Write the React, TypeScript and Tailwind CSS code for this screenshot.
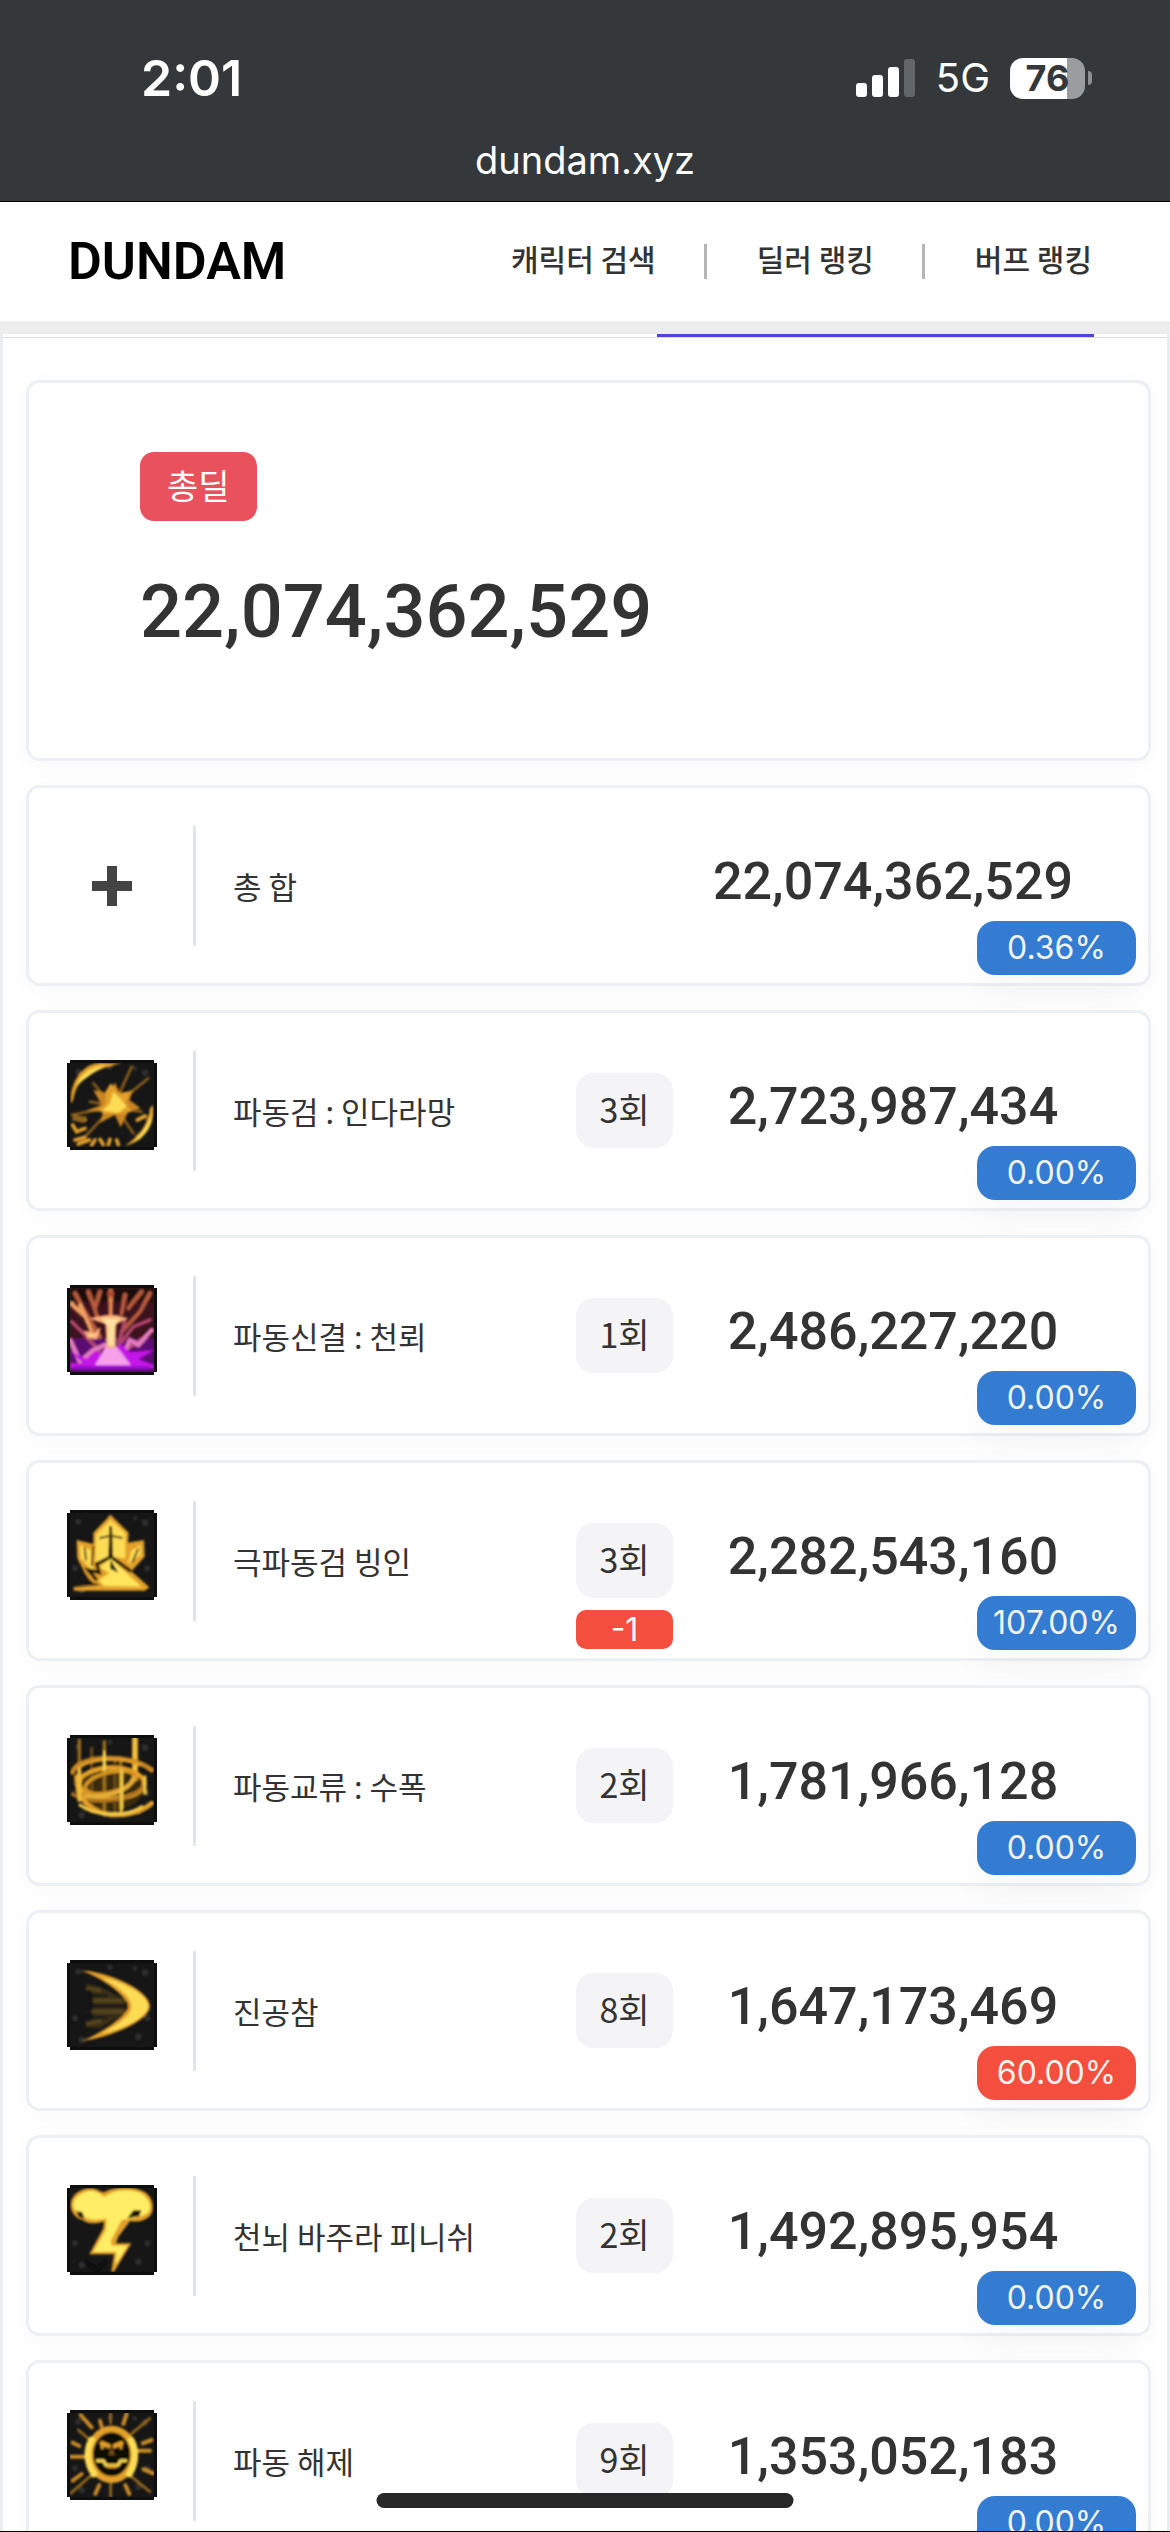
import type { ReactNode } from "react";
import clsx from "clsx";

interface Skill {
  id: string;
  name: string;
  damage: number;
  rate: string;
  rateTone?: "blue" | "red";
  count?: number;
  diff?: number;
  icon: ReactNode;
}

const TOTAL = 22074362529;

const GOLD = "#e3a029";
const BRIGHT = "#fddc55";
const DIM = "#8a5d1a";

const fmt = (n: number) => n.toLocaleString("en-US");

function SkillArt({ id, bg = "#161616", children }: { id: string; bg?: string; children: ReactNode }) {
  return (
    <svg viewBox="51 60 270 270" className="size-[90px]" aria-hidden="true">
      <defs>
        <filter id={`${id}-soft`} x="-10%" y="-10%" width="120%" height="120%">
          <feGaussianBlur stdDeviation="3.2" />
        </filter>
        <clipPath id={`${id}-clip`}>
          <rect x="60" y="69" width="252" height="252" />
        </clipPath>
      </defs>
      <path d="M60 60H312V69H321V321H312V330H60V321H51V69H60Z" fill="#0d0e0e" />
      <rect x="60" y="69" width="252" height="252" fill={bg} />
      <g clipPath={`url(#${id}-clip)`}>
        <g filter={`url(#${id}-soft)`} fill="none" strokeLinecap="round">
          {children}
        </g>
      </g>
    </svg>
  );
}

const Specks = () => (
  <g fill="#2d2d2d">
    <circle cx="85" cy="95" r="9" />
    <circle cx="285" cy="98" r="10" />
    <circle cx="255" cy="85" r="7" />
    <circle cx="75" cy="235" r="9" />
    <circle cx="95" cy="300" r="10" />
    <circle cx="292" cy="235" r="9" />
    <circle cx="265" cy="290" r="10" />
    <circle cx="180" cy="82" r="8" />
  </g>
);

const Indra = () => (
  <SkillArt id="indra">
    <Specks />
    <path d="M63 190C58 130 95 72 150 68L215 70C160 82 105 100 80 145C70 165 72 185 63 190Z" fill={GOLD} />
    <path d="M78 138C93 100 125 80 168 74C130 98 108 112 78 138Z" fill={BRIGHT} />
    <path d="M308 195C318 245 290 300 225 318C265 290 295 255 300 205Z" fill={GOLD} />
    <path d="M305 222C307 262 282 294 248 308C275 282 294 255 305 222Z" fill={BRIGHT} />
    <g stroke={DIM} strokeWidth="8">
      <path d="M190 200L245 80M190 200L295 115M190 200L130 130M195 200L120 185M190 200L110 285M200 205L250 280M190 200L65 225M200 205L275 215" />
    </g>
    <path
      d="M195 128L210 160L250 150L238 180L272 205L235 215L212 262L195 225L150 248L160 215L108 212L155 195L130 150L168 158Z"
      fill="#c98520"
    />
    <path d="M182 130L205 160L242 155L228 188L245 215L205 222L160 222L145 208L168 190L166 155Z" fill={GOLD} />
    <path d="M190 155L212 178L230 200L205 218L158 212L180 190Z" fill={BRIGHT} />
    <g stroke={GOLD} strokeWidth="11">
      <path d="M75 230L105 240M68 255L80 275L105 265M75 300L105 292M85 312L118 300M125 315L135 300M150 298L160 314M175 314L180 298M200 300L205 314M262 240L285 228" />
    </g>
    <path d="M70 225L112 230L100 250L66 240Z" fill="#8f641c" />
  </SkillArt>
);

const Thunder = () => (
  <SkillArt id="thunder" bg="#3c121e">
    <path d="M60 69H312V110H60Z" fill="#1d0d0a" />
    <path d="M60 220H312V321H60Z" fill="#5c0a74" />
    <g stroke="#b65a3c" strokeWidth="13">
      <path d="M75 85L105 140L150 215M115 80L130 120L145 165M150 80L135 130M275 80L235 130M300 85L270 140L215 200M225 90L215 145M65 120L100 150" />
    </g>
    <g stroke="#b2456e" strokeWidth="11">
      <path d="M65 170L110 215L150 260M300 165L250 185L215 230M308 195L265 230L210 265M225 165L205 240" />
    </g>
    <path d="M90 120L110 165L130 210M65 115L105 155" stroke="#f0a060" strokeWidth="12" />
    <path d="M105 200L135 205L150 190L140 220L115 218Z" fill="#ffc985" stroke="#f5a070" strokeWidth="5" />
    <path d="M60 225L90 290L130 255L165 240M305 195L265 240L240 225L225 260" stroke="#e67ac0" strokeWidth="13" />
    <path d="M60 258L110 282L135 258L165 270L215 238L240 262L312 256L265 283L312 300V310H60V295L100 295Z" fill="#c512e8" />
    <path d="M135 300L155 268L168 242L197 242L218 268L242 300Z" fill="#f5a0e8" />
    <path d="M182 78V150" stroke="#e08550" strokeWidth="13" />
    <circle cx="182" cy="86" r="10" fill="#b04c38" />
    <path d="M118 160L165 150L200 150L234 160L199 178L196 248H170L166 178Z" fill="#f7ac72" />
    <path d="M152 160H210L193 185V242H173V185Z" fill="#ffdf9f" />
    <path d="M75 308H295" stroke="#9a0cd0" strokeWidth="10" />
  </SkillArt>
);

const Ice = () => (
  <SkillArt id="ice">
    <Specks />
    <path
      d="M182 75L236 128L234 158L282 150L284 200L244 244L298 292L284 302H72L70 292L150 284L118 276L82 205L80 150L130 162L130 128Z"
      fill={GOLD}
    />
    <path d="M70 286H138L118 268L100 240L86 270Z" fill="#161616" />
    <path d="M182 90L226 130V205L182 200L136 222L138 135Z" fill={BRIGHT} />
    <path d="M90 165L122 180L130 245L92 205ZM272 165L244 182L234 222L272 195Z" fill={BRIGHT} />
    <path d="M162 288L146 270L180 250L150 232L182 205L274 290Z" fill="#ffe45c" />
    <path d="M178 108H186L189 205H175Z" fill="#15120a" />
    <path d="M150 144L178 138M188 138L216 144M104 175L108 210M264 178L248 215M130 170L125 225" stroke="#5c400e" strokeWidth="6" />
    <path d="M185 202L240 242M175 205L140 222L148 248L115 240L138 268" stroke="#171208" strokeWidth="10" />
    <path d="M182 210L205 248L180 236Z" fill="#171208" />
  </SkillArt>
);

const Vortex = () => (
  <SkillArt id="vortex">
    <Specks />
    <ellipse cx="185" cy="215" rx="100" ry="70" fill="#3b2a0f" />
    <path d="M88 75V240M163 80V300M212 130V300" stroke="#9a6f1c" strokeWidth="10" />
    <path d="M125 100V290M195 140V290" stroke="#6a4c17" strokeWidth="9" />
    <path d="M255 72V190" stroke={GOLD} strokeWidth="18" />
    <path d="M255 72V170" stroke="#f2c744" strokeWidth="9" />
    <path d="M68 172C78 122 240 112 305 165" stroke="#c98620" strokeWidth="15" />
    <path d="M85 160C120 130 220 125 270 150" stroke={GOLD} strokeWidth="8" />
    <ellipse cx="185" cy="205" rx="98" ry="46" stroke={GOLD} strokeWidth="14" />
    <ellipse cx="180" cy="202" rx="76" ry="30" stroke="#d59424" strokeWidth="11" transform="rotate(-14 180 202)" />
    <path d="M95 245C150 250 235 235 250 190" stroke="#e5b03a" strokeWidth="11" />
    <path d="M68 238C120 270 240 262 280 215" stroke="#b1761e" strokeWidth="10" />
    <path d="M80 185C80 320 240 320 305 265" stroke={GOLD} strokeWidth="15" />
    <path d="M90 270C140 308 230 304 275 275M285 185V235M215 165V285" stroke="#f5cb48" strokeWidth="9" />
    <path d="M88 165V255" stroke="#efbe3e" strokeWidth="12" />
    <path d="M163 110V165" stroke={BRIGHT} strokeWidth="8" />
  </SkillArt>
);

const Slash = () => (
  <SkillArt id="slash">
    <Specks />
    <path d="M108 130L150 140L225 180V218L150 265L105 262L130 235V165Z" fill="#3a2f17" />
    <path d="M132 182H215M128 215H215M112 145L150 152M112 250L150 245" stroke="#54441c" strokeWidth="11" />
    <path d="M110 166H170M105 198H230M110 232H170" stroke="#161616" strokeWidth="7" />
    <path d="M95 92C170 92 300 150 300 198C300 240 190 290 97 303C170 270 232 225 235 198C230 168 160 115 95 92Z" fill={GOLD} />
    <path d="M150 112C220 125 294 165 294 198C294 232 220 268 155 280C205 255 245 225 245 198C245 172 200 135 150 112Z" fill={BRIGHT} />
  </SkillArt>
);

const Bazooka = () => (
  <SkillArt id="bazooka">
    <Specks />
    <path
      d="M62 120C62 85 100 68 125 70C140 70 150 82 163 82C185 68 235 62 270 75C305 85 318 125 302 150C285 170 260 172 240 168L205 215L198 235H244L192 320L184 320L192 268H118L160 190L162 170C140 175 115 180 98 165C75 160 62 140 62 120Z"
      fill={GOLD}
    />
    <path
      d="M70 120C72 92 105 78 125 78C145 78 155 95 166 95C190 75 235 72 265 82C298 95 306 125 296 142C270 160 245 160 215 165L182 228L186 242H232L196 300L200 260H130L168 195L170 160C135 168 110 165 100 150C85 145 70 135 70 120Z"
      fill="#ffee65"
    />
    <path d="M80 138L98 142L102 162L85 155ZM232 160L250 136H274L268 154Z" fill="#1b1407" />
    <path d="M110 292L140 315L165 290" stroke="#080808" strokeWidth="10" />
  </SkillArt>
);

const Release = () => (
  <SkillArt id="release">
    <Specks />
    <g stroke="#9a6a1c" strokeWidth="8">
      <path d="M300 85L240 135M62 310L125 255M300 305L245 260M85 120L120 150M182 70V100M182 270V320" />
    </g>
    <g stroke="#c98a26" strokeWidth="12">
      <path d="M92 75L125 112M230 72L220 102M68 158L88 168M305 150L278 160M62 200H110M300 182H265M68 272L95 252M310 250L280 238M148 285L136 312M226 285L238 312M150 92L155 110" />
    </g>
    <ellipse cx="185" cy="192" rx="56" ry="68" fill="#110d06" />
    <ellipse cx="185" cy="193" rx="66" ry="76" stroke={GOLD} strokeWidth="20" />
    <path d="M125 150C108 180 110 220 132 252M243 150C260 180 258 220 238 252" stroke={BRIGHT} strokeWidth="20" />
    <path d="M142 212H160L168 226H204L212 212H228" stroke={BRIGHT} strokeWidth="9" strokeLinejoin="round" />
    <path d="M156 160L176 168M214 160L194 168" stroke={GOLD} strokeWidth="13" />
    <path d="M157 162V174M213 162V174" stroke={GOLD} strokeWidth="8" />
    <path d="M180 192L185 178L190 192Z" stroke="#6e4c18" strokeWidth="7" />
    <path d="M172 226H200V234H172Z" fill={GOLD} />
  </SkillArt>
);

const PlusMark = () => (
  <svg viewBox="0 0 40 40" className="size-10" aria-hidden="true">
    <path d="M15 0H25V15H40V25H25V40H15V25H0V15H15Z" fill="#444" />
  </svg>
);

const ROWS: Skill[] = [
  { id: "total", name: "총 합", damage: TOTAL, rate: "0.36%", icon: <PlusMark /> },
  { id: "indra", name: "파동검 : 인다라망", damage: 2723987434, rate: "0.00%", count: 3, icon: <Indra /> },
  { id: "thunder", name: "파동신결 : 천뢰", damage: 2486227220, rate: "0.00%", count: 1, icon: <Thunder /> },
  { id: "ice", name: "극파동검 빙인", damage: 2282543160, rate: "107.00%", count: 3, diff: -1, icon: <Ice /> },
  { id: "vortex", name: "파동교류 : 수폭", damage: 1781966128, rate: "0.00%", count: 2, icon: <Vortex /> },
  { id: "slash", name: "진공참", damage: 1647173469, rate: "60.00%", rateTone: "red", count: 8, icon: <Slash /> },
  { id: "bazooka", name: "천뇌 바주라 피니쉬", damage: 1492895954, rate: "0.00%", count: 2, icon: <Bazooka /> },
  { id: "release", name: "파동 해제", damage: 1353052183, rate: "0.00%", count: 9, icon: <Release /> },
];

const NAV = ["캐릭터 검색", "딜러 랭킹", "버프 랭킹"];

const cardClass = "rounded-[14px] border-[3px] border-[#eceff3] bg-white shadow-[0_4px_24px_rgba(0,0,0,0.03)]";

function StatusBar() {
  return (
    <div className="shrink-0 border-b border-black bg-[#34383b] font-['Inter',sans-serif] text-white">
      <div className="flex h-[134px] items-center justify-between pt-[22px] pr-[78px] pl-[141px]">
        <span className="text-[50px] leading-none font-semibold">2:01</span>
        <div className="flex items-center gap-5">
          <svg viewBox="0 0 60 38" className="h-[38px] w-[60px]" aria-hidden="true">
            <rect x="0" y="24" width="11" height="14" rx="3" fill="#fff" />
            <rect x="16" y="16" width="11" height="22" rx="3" fill="#fff" />
            <rect x="32" y="8" width="11" height="30" rx="3" fill="#fff" />
            <rect x="48" y="0" width="11" height="38" rx="3" fill="#636669" />
          </svg>
          <span className="text-[40px] leading-none">5G</span>
          <div className="flex items-center gap-[3px]">
            <div className="flex h-[41px] w-[75px] items-center justify-center overflow-hidden rounded-[13px] bg-linear-to-r from-white from-76% to-[#9b9c9e] to-76% text-[36px] leading-none font-bold text-[#34383b]">
              76
            </div>
            <div className="h-[14px] w-[4px] rounded-r-full bg-[#8d8f91]" />
          </div>
        </div>
      </div>
      <p className="pb-[15px] text-center text-[38px] leading-[52px]">dundam.xyz</p>
    </div>
  );
}

function SiteHeader() {
  return (
    <header className="flex h-[119px] shrink-0 items-center justify-between bg-white pr-[78px] pl-[68px]">
      <a href="#home" className="font-['Roboto',sans-serif] text-[52px] leading-none font-semibold text-black">
        DUNDAM
      </a>
      <nav className="flex items-center">
        {NAV.map((label, i) => (
          <a key={label} href="#nav" className={clsx("flex items-center", i > 0 && "ml-[48px]")}>
            {i > 0 && <span className="mr-[50px] h-[35px] w-[3px] bg-[#b5b5b5]" />}
            <span className="pb-2 text-[30px] leading-none font-medium">{label}</span>
          </a>
        ))}
      </nav>
    </header>
  );
}

function SkillRow({ skill }: { skill: Skill }) {
  return (
    <li className={clsx(cardClass, "relative flex h-[201px] shrink-0 items-center pr-[35px] pl-[38px]")}>
      <div className={clsx("mr-9 flex w-[90px] shrink-0 justify-center", skill.count !== undefined && "pb-[12px]")}>
        {skill.icon}
      </div>
      <div className="mr-[37px] h-[120px] w-[3px] shrink-0 bg-[#e0e4e8]" />
      <p className="min-w-0 flex-1 text-[31px] leading-10">{skill.name}</p>
      {skill.count !== undefined && (
        <div className="relative shrink-0">
          <span className="flex h-[75px] w-[97px] items-center justify-center rounded-[18px] bg-[#f4f4f7] pb-1 text-[34px] leading-none">
            {skill.count}회
          </span>
          {skill.diff !== undefined && (
            <span className="absolute top-full left-0 mt-3 flex h-[39px] w-full items-center justify-center rounded-[10px] bg-[#f44e3e] font-['Inter',sans-serif] text-[32px] leading-none text-white">
              {skill.diff}
            </span>
          )}
        </div>
      )}
      <strong className="w-[440px] shrink-0 pb-2 text-center font-['Roboto',sans-serif] text-[52px] leading-none font-medium">
        {fmt(skill.damage)}
      </strong>
      <span
        className={clsx(
          "absolute right-3 bottom-2 flex h-[54px] w-[159px] items-center justify-center rounded-[18px] font-['Inter',sans-serif] text-[32px] leading-none text-[#f3f3ee] shadow-[0_20px_40px_rgba(0,0,0,0.03)]",
          skill.rateTone === "red" ? "bg-[#f44e3e]" : "bg-[#347cd1]",
        )}
      >
        {skill.rate}
      </span>
    </li>
  );
}

export default function App() {
  return (
    <div className="relative flex h-screen flex-col overflow-hidden border-b border-black bg-white font-['Noto_Sans_CJK_KR',sans-serif] text-[#333]">
      <StatusBar />
      <SiteHeader />
      <div className="h-[13px] shrink-0 bg-[#ededed]" />

      <main className="min-h-0 flex-1 overflow-hidden border-x-[3px] border-[#e9edf0]">
        <div className="flex h-1 justify-end border-b border-[#dcdcdc] pr-[73px]">
          <div className="h-full w-[437px] bg-[#4f45d9]" />
        </div>

        <div className="flex flex-col gap-6 pt-[42px] pr-4 pl-[23px]">
          <section className={clsx(cardClass, "flex h-[381px] shrink-0 flex-col items-start pt-[69px] pl-[111px]")}>
            <h1 className="flex h-[69px] items-center rounded-[14px] bg-[#e9515d] px-[27px] pb-1 text-[34px] leading-none font-normal text-white">
              총딜
            </h1>
            <p className="mt-[53px] font-['Roboto',sans-serif] text-[74px] leading-[76px] font-medium">{fmt(TOTAL)}</p>
          </section>

          <ul className="flex flex-col gap-6">
            {ROWS.map((row) => (
              <SkillRow key={row.id} skill={row} />
            ))}
          </ul>
        </div>
      </main>

      <div className="absolute bottom-[23px] left-1/2 h-[15px] w-[417px] -translate-x-1/2 rounded-full bg-[#282828]" />
    </div>
  );
}
